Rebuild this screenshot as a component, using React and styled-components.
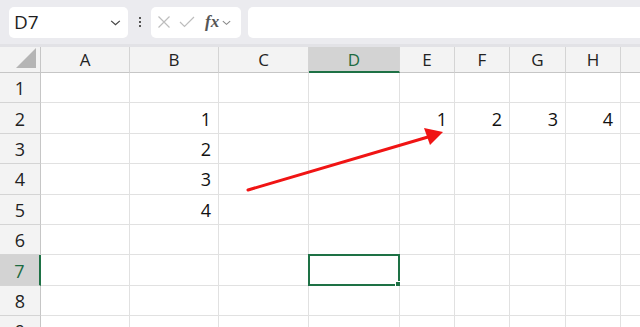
import React from "react";
import styled, { createGlobalStyle } from "styled-components";

const GlobalStyle = createGlobalStyle`
  html, body {
    margin: 0;
    padding: 0;
    background: #ffffff;
    overflow: hidden;
  }
  body {
    font-family: "Open Sans", "Noto Sans", sans-serif;
  }
`;

const COLS = [
  { key: "A", width: 89 },
  { key: "B", width: 89 },
  { key: "C", width: 90 },
  { key: "D", width: 91 },
  { key: "E", width: 55 },
  { key: "F", width: 55 },
  { key: "G", width: 56 },
  { key: "H", width: 55 },
  { key: "I", width: 60 }
];

const ROWS = 9;
const ACTIVE = { col: "D", row: 7 };

const DATA = {
  B2: "1",
  B3: "2",
  B4: "3",
  B5: "4",
  E2: "1",
  F2: "2",
  G2: "3",
  H2: "4"
};

const Page = styled.div`
  position: relative;
  width: 640px;
  height: 327px;
  overflow: hidden;
`;

const Toolbar = styled.div`
  display: flex;
  align-items: center;
  height: 44px;
  padding: 0 0 0 9px;
  background: #ebebef;
  border-bottom: 3px solid #e2e2e6;
`;

const NameBox = styled.div`
  display: flex;
  align-items: center;
  justify-content: space-between;
  box-sizing: border-box;
  width: 119px;
  height: 31px;
  padding: 0 6px 0 5px;
  background: #fff;
  border-radius: 5px;
  font-size: 19px;
  color: #1f1f1f;
`;

const Dots = styled.div`
  display: flex;
  flex-direction: column;
  gap: 2px;
  margin: 0 10px 0 11px;
  span {
    width: 2px;
    height: 2px;
    background: #555;
  }
`;

const FxBox = styled.div`
  display: flex;
  align-items: center;
  box-sizing: border-box;
  width: 90px;
  height: 31px;
  padding: 0 6px;
  gap: 8px;
  background: #fff;
  border-radius: 5px;
`;

const Fx = styled.span`
  font-family: "Liberation Serif", serif;
  font-style: italic;
  font-weight: bold;
  font-size: 17px;
  color: #555;
  margin-left: 2px;
  margin-right: -6px;
`;

const FormulaInput = styled.div`
  flex: 1;
  height: 31px;
  margin-left: 7px;
  background: #fff;
  border-radius: 5px 0 0 5px;
`;

const Grid = styled.div`
  display: grid;
  grid-template-columns: 41px ${COLS.map((c) => `${c.width}px`).join(" ")};
  grid-template-rows: 26px;
  grid-auto-rows: 30.4px;
`;

const Corner = styled.div`
  position: relative;
  background: #f3f3f3;
  border-right: 1px solid #c6c6c6;
  border-bottom: 1px solid #c6c6c6;
  &::after {
    content: "";
    position: absolute;
    right: 4px;
    bottom: 4px;
    width: 0;
    height: 0;
    border-left: 20px solid transparent;
    border-bottom: 20px solid #b5b5b5;
  }
`;

const ColHead = styled.div`
  display: flex;
  align-items: center;
  justify-content: center;
  box-sizing: border-box;
  font-size: 17px;
  color: ${(p) => (p.active ? "#1d6b41" : "#222")};
  background: ${(p) => (p.active ? "#d3d3d3" : "#f3f3f3")};
  border-right: 1px solid #d4d4d4;
  border-bottom: ${(p) => (p.active ? "2px solid #1e7145" : "1px solid #c6c6c6")};
`;

const RowHead = styled.div`
  display: flex;
  align-items: center;
  justify-content: center;
  box-sizing: border-box;
  padding-top: 1px;
  font-size: 18px;
  color: ${(p) => (p.active ? "#1d6b41" : "#222")};
  background: ${(p) => (p.active ? "#d3d3d3" : "#f3f3f3")};
  border-bottom: 1px solid #d4d4d4;
  border-right: ${(p) => (p.active ? "2px solid #1e7145" : "1px solid #c6c6c6")};
`;

const Cell = styled.div`
  position: relative;
  display: flex;
  align-items: center;
  justify-content: flex-end;
  box-sizing: border-box;
  padding: 1px 7px 0 0;
  font-size: 18px;
  color: #111;
  background: #fff;
  border-right: 1px solid #e1e1e1;
  border-bottom: 1px solid #e1e1e1;
`;

const Selection = styled.div`
  position: absolute;
  left: -1px;
  top: -1px;
  right: -1px;
  bottom: -1px;
  border: 2px solid #1e7145;
  pointer-events: none;
  &::after {
    content: "";
    position: absolute;
    right: -4px;
    bottom: -4px;
    width: 5px;
    height: 5px;
    background: #1e7145;
    border: 1px solid #fff;
  }
`;

const Arrow = styled.svg`
  position: absolute;
  left: 0;
  top: 0;
  pointer-events: none;
`;

const Chevron = ({ size = 12, color = "#555" }) => (
  <svg width={size} height={size} viewBox="0 0 12 12">
    <path d="M2 4.5 L6 8 L10 4.5" fill="none" stroke={color} strokeWidth="1.2" />
  </svg>
);

const App = () => {
  const rows = Array.from({ length: ROWS }, (_, i) => i + 1);
  return (
    <Page>
      <GlobalStyle />
      <Toolbar>
        <NameBox>
          <span>D7</span>
          <Chevron size={13} color="#444" />
        </NameBox>
        <Dots>
          <span />
          <span />
          <span />
        </Dots>
        <FxBox>
          <svg width="14" height="14" viewBox="0 0 14 14">
            <path d="M1.5 1.5 L12.5 12.5 M12.5 1.5 L1.5 12.5" stroke="#bdbdbd" strokeWidth="1.2" />
          </svg>
          <svg width="16" height="14" viewBox="0 0 16 14">
            <path d="M1 7 L5.5 11.5 L15 2" fill="none" stroke="#bdbdbd" strokeWidth="1.2" />
          </svg>
          <Fx>fx</Fx>
          <Chevron size={11} color="#888" />
        </FxBox>
        <FormulaInput />
      </Toolbar>
      <Grid>
        <Corner />
        {COLS.map((c) => (
          <ColHead key={c.key} active={c.key === ACTIVE.col}>
            {c.key === "I" ? "" : c.key}
          </ColHead>
        ))}
        {rows.map((r) => (
          <React.Fragment key={r}>
            <RowHead active={r === ACTIVE.row}>{r}</RowHead>
            {COLS.map((c) => {
              const id = `${c.key}${r}`;
              const isActive = c.key === ACTIVE.col && r === ACTIVE.row;
              return (
                <Cell key={id}>
                  {DATA[id]}
                  {isActive && <Selection />}
                </Cell>
              );
            })}
          </React.Fragment>
        ))}
      </Grid>
      <Arrow width="640" height="327" viewBox="0 0 640 327">
        <line x1="248" y1="190" x2="428" y2="137" stroke="#f01414" strokeWidth="3" strokeLinecap="round" />
        <polygon points="443,132 424,128 430,145" fill="#f01414" />
      </Arrow>
    </Page>
  );
};

export default App;
